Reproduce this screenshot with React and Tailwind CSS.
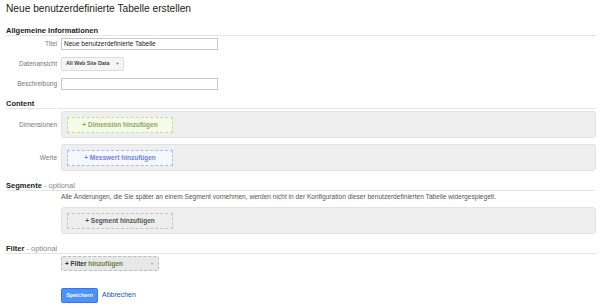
const font = { fontFamily: '"Liberation Sans", Arial, sans-serif' }

function SectionHeader({ title, optional, className = '' }) {
  return (
    <div className={`h-[10px] border-b border-[#e5e5e5] text-[7.5px] leading-[9px] ${className}`}>
      <span className="font-bold text-[#222]">{title}</span>
      {optional && <span className="text-[#888]"> - optional</span>}
    </div>
  )
}

function Row({ label, children, className = '' }) {
  return (
    <div className={`flex items-center ${className}`}>
      <div className="w-[51px] shrink-0 text-right text-[6.5px] text-[#777]">{label}</div>
      <div className="ml-[4px] flex-1">{children}</div>
    </div>
  )
}

function AddBox({ label, tone, className = '' }) {
  const tones = {
    green: 'bg-[#f6fbe8] border-[#c9db9e] text-[#8ea862]',
    blue: 'bg-[#f7f8ff] border-[#aab8f2] text-[#6f84e6]',
    gray: 'bg-[#eeeeee] border-[#c6c6c6] text-[#555]',
  }
  return (
    <div className={`flex h-[27px] items-start rounded-[3px] border border-[#e2e2e2] bg-[#efefef] ${className}`}>
      <div
        className={`ml-[5px] mt-[5px] flex h-[16px] w-[106px] items-center justify-center border border-dashed text-[6.5px] font-bold ${tones[tone]}`}
      >
        {label}
      </div>
    </div>
  )
}

export default function App() {
  return (
    <div className="h-[308px] w-[600px] bg-white pl-[6px] pr-[4px] pt-[3px]" style={font}>
      <h1 className="text-[10.2px] leading-[12px] text-[#222]">Neue benutzerdefinierte Tabelle erstellen</h1>

      <SectionHeader title="Allgemeine Informationen" className="mt-[11px]" />

      <Row label="Titel" className="mt-[2px]">
        <div className="flex h-[12px] w-[157px] items-center border border-[#c8c8c8] bg-white pl-[2px] text-[6.5px] text-[#222]">
          Neue benutzerdefinierte Tabelle
        </div>
      </Row>
      <Row label="Datenansicht" className="mt-[7px]">
        <div className="flex h-[14px] w-[63px] items-center whitespace-nowrap rounded-[2px] border border-[#dcdcdc] bg-[#f5f5f5] pl-[4px] text-[5.3px] font-bold text-[#444]">
          All Web Site Data
          <span className="ml-[6px] text-[4px] text-[#777]">▼</span>
        </div>
      </Row>
      <Row label="Beschreibung" className="mt-[7px]">
        <div className="h-[12px] w-[157px] border border-[#c8c8c8] bg-white" />
      </Row>

      <SectionHeader title="Content" className="mt-[9px]" />

      <Row label="Dimensionen" className="mt-[2px]">
        <AddBox label="+ Dimension hinzufügen" tone="green" />
      </Row>
      <Row label="Werte" className="mt-[6px]">
        <AddBox label="+ Messwert hinzufügen" tone="blue" />
      </Row>

      <SectionHeader title="Segmente" optional className="mt-[10px]" />
      <div className="ml-[55px] mt-[2px] text-[6.6px] leading-[8px] text-[#555]">
        Alle Änderungen, die Sie später an einem Segment vornehmen, werden nicht in der Konfiguration dieser benutzerdefinierten Tabelle widergespiegelt.
      </div>
      <div className="ml-[55px] mt-[6px]">
        <AddBox label="+ Segment hinzufügen" tone="gray" className="h-[26px]" />
      </div>

      <SectionHeader title="Filter" optional className="mt-[10px]" />
      <div className="ml-[55px] mt-[2px]">
        <div className="flex h-[15px] w-[98px] items-center justify-between rounded-[2px] border border-dashed border-[#bdbdbd] bg-[#e8e8e8] pl-[3px] pr-[4px] text-[6.5px] font-bold">
          <span>
            <span className="text-[#333]">+ Filter </span>
            <span className="text-[#6f7d45]">hinzufügen</span>
          </span>
          <span className="text-[4px] text-[#aaa]">▼</span>
        </div>
      </div>

      <div className="ml-[55px] mt-[17px] flex items-center">
        <div className="flex h-[15px] w-[37px] items-center justify-center rounded-[2px] border border-[#3079ed] bg-[#4d90fe] text-[5.5px] font-bold text-white">
          Speichern
        </div>
        <span className="ml-[4px] text-[7px] text-[#1155cc]">Abbrechen</span>
      </div>
    </div>
  )
}
